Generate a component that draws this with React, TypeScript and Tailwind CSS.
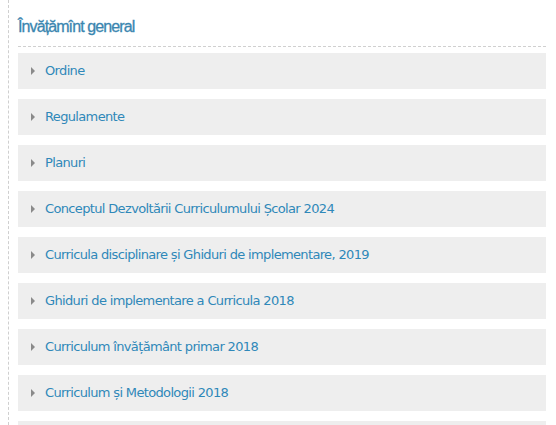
const items = [
  'Ordine',
  'Regulamente',
  'Planuri',
  'Conceptul Dezvoltării Curriculumului Școlar 2024',
  'Curricula disciplinare și Ghiduri de implementare, 2019',
  'Ghiduri de implementare a Curricula 2018',
  'Curriculum învățământ primar 2018',
  'Curriculum și Metodologii 2018',
  'Manuale',
]

export default function App() {
  return (
    <div className="h-[425px] w-[556px] overflow-hidden bg-white font-['DejaVu_Sans',sans-serif]">
      <div className="ml-2 h-full border-l border-dashed border-[#cfcfcf] pl-[9px] pr-[10px]">
        <h2 className="pt-[17px] font-['Liberation_Sans',sans-serif] text-[16px] leading-[20px] tracking-[-0.9px] text-[#3a86b0] [-webkit-text-stroke:0.3px_#3a86b0]">
          Învățămînt general
        </h2>
        <div className="mt-[9px] border-t border-dashed border-[#d0d0d0]" />
        <div className="mt-[6px] flex flex-col gap-[10px]">
          {items.map((label) => (
            <div key={label} className="flex h-9 shrink-0 items-center bg-[#eeeeee] pl-[13px]">
              <svg width="4" height="8" viewBox="0 0 4 8" className="mr-[10px]">
                <path d="M0 0 L4 4 L0 8 Z" fill="#8a8a8a" />
              </svg>
              <span className="text-[13px] tracking-[-0.65px] text-[#2f88b9]">{label}</span>
            </div>
          ))}
        </div>
      </div>
    </div>
  )
}
